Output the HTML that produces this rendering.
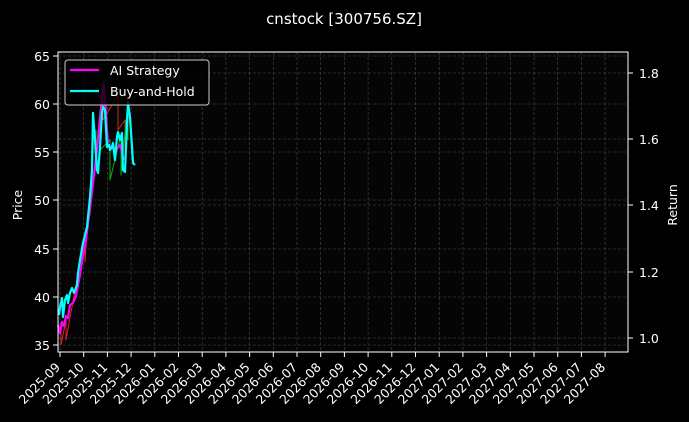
<!DOCTYPE html>
<html><head><meta charset="utf-8"><style>
html,body{margin:0;padding:0;background:#000;}
svg{display:block;font-family:"DejaVu Sans","Liberation Sans",sans-serif;}
</style></head><body>
<svg width="689" height="422" viewBox="0 0 689 422" xmlns="http://www.w3.org/2000/svg">
<rect width="689" height="422" fill="#000"/>
<rect x="58" y="52" width="570" height="300" fill="#050505"/>
<text x="344" y="24" fill="#fff" font-size="15" text-anchor="middle">cnstock [300756.SZ]</text>
<g stroke="#4a4a4a" stroke-width="0.6" stroke-dasharray="3,2">
<line x1="58" x2="628" y1="56" y2="56"/><line x1="58" x2="628" y1="104" y2="104"/><line x1="58" x2="628" y1="152" y2="152"/><line x1="58" x2="628" y1="200" y2="200"/><line x1="58" x2="628" y1="249" y2="249"/><line x1="58" x2="628" y1="297" y2="297"/><line x1="58" x2="628" y1="345" y2="345"/>
<line x1="58" x2="628" y1="73" y2="73"/><line x1="58" x2="628" y1="139" y2="139"/><line x1="58" x2="628" y1="205" y2="205"/><line x1="58" x2="628" y1="272" y2="272"/><line x1="58" x2="628" y1="338" y2="338"/>
</g>
<g id="vg" stroke="#4a4a4a" stroke-width="0.6" stroke-dasharray="3,2"></g>
<g fill="none" stroke-linejoin="round">
<polyline stroke="#d22" stroke-width="1" points="61,330 61,345 66,320 66,340 85,235 85,262 90,190 90,215 103,80 103,120 118,95 118,130 125,120 125,160"/>
<polyline stroke="#1a1" stroke-width="1" points="96,130 96,160 100,110 100,150 110,140 110,180 121,135 121,175 128,100 128,140"/>
<polyline stroke="#f0f" stroke-width="2.2" points="58,325 60,333 62,322 64,326 66,316 68,318 70,305 73,303 76,296 78,285 80,275 83,255 86,240 89,215 91,200 94,175 97,150 100,120 102,100 104,85 106,115 108,145 112,148 116,150 120,145 124,160"/>
<polyline stroke="#0ff" stroke-width="2.2" points="59,315 60,307 62,298 63,317 65,300 67,295 68,303 70,293 72,288 74,293 77,285 78,273 80,260 83,243 87,227 90,197 92,170 93,113 95,140 97,170 98,173 100,147 102,113 103,107 105,110 107,147 109,145 110,150 112,147 113,143 115,160 117,137 118,132 120,140 122,133 123,170 125,172 127,123 128,103 130,117 132,147 133,163 135,165"/>
</g>
<rect x="58" y="52" width="570" height="300" fill="none" stroke="#fff" stroke-width="1"/>
<g fill="#fff" font-size="12.5" text-anchor="end">
<text x="50" y="61">65</text><text x="50" y="109">60</text><text x="50" y="157">55</text><text x="50" y="205">50</text><text x="50" y="254">45</text><text x="50" y="302">40</text><text x="50" y="350">35</text>
</g>
<g stroke="#fff" stroke-width="1">
<line x1="53" x2="58" y1="56" y2="56"/><line x1="53" x2="58" y1="104" y2="104"/><line x1="53" x2="58" y1="152" y2="152"/><line x1="53" x2="58" y1="200" y2="200"/><line x1="53" x2="58" y1="249" y2="249"/><line x1="53" x2="58" y1="297" y2="297"/><line x1="53" x2="58" y1="345" y2="345"/>
<line x1="628" x2="633" y1="73" y2="73"/><line x1="628" x2="633" y1="139" y2="139"/><line x1="628" x2="633" y1="205" y2="205"/><line x1="628" x2="633" y1="272" y2="272"/><line x1="628" x2="633" y1="338" y2="338"/>
</g>
<g fill="#fff" font-size="12.5">
<text x="639" y="78">1.8</text><text x="639" y="144">1.6</text><text x="639" y="210">1.4</text><text x="639" y="277">1.2</text><text x="639" y="343">1.0</text>
</g>
<text transform="translate(22,205) rotate(-90)" fill="#fff" font-size="12.5" text-anchor="middle">Price</text>
<text transform="translate(677,205) rotate(-90)" fill="#fff" font-size="12.5" text-anchor="middle">Return</text>
<g id="xt" fill="#fff" font-size="12.5" text-anchor="end"></g>
<g id="xk" stroke="#fff" stroke-width="1"></g>
<rect x="65" y="60" width="144" height="45" rx="3" fill="#000" fill-opacity="0.8" stroke="#ccc" stroke-width="1"/>
<line x1="70" x2="99" y1="70" y2="70" stroke="#f0f" stroke-width="2.2"/>
<line x1="70" x2="99" y1="91" y2="91" stroke="#0ff" stroke-width="2.2"/>
<text x="110" y="75" fill="#fff" font-size="12.5">AI Strategy</text>
<text x="110" y="96" fill="#fff" font-size="12.5">Buy-and-Hold</text>
<script>
var labs=["2025-09","2025-10","2025-11","2025-12","2026-01","2026-02","2026-03","2026-04","2026-05","2026-06","2026-07","2026-08","2026-09","2026-10","2026-11","2026-12","2027-01","2027-02","2027-03","2027-04","2027-05","2027-06","2027-07","2027-08"];
var ns="http://www.w3.org/2000/svg",xt=document.getElementById("xt"),xk=document.getElementById("xk"),vg=document.getElementById("vg");
labs.forEach(function(l,i){var x=60+23.7*i;
var t=document.createElementNS(ns,"text");t.setAttribute("transform","translate("+(x+1)+",368) rotate(-45)");t.textContent=l;xt.appendChild(t);
var k=document.createElementNS(ns,"line");k.setAttribute("x1",x);k.setAttribute("x2",x);k.setAttribute("y1",352);k.setAttribute("y2",357);xk.appendChild(k);
var g=document.createElementNS(ns,"line");g.setAttribute("x1",x);g.setAttribute("x2",x);g.setAttribute("y1",52);g.setAttribute("y2",352);vg.appendChild(g);});
</script>
</svg>
</body></html>
